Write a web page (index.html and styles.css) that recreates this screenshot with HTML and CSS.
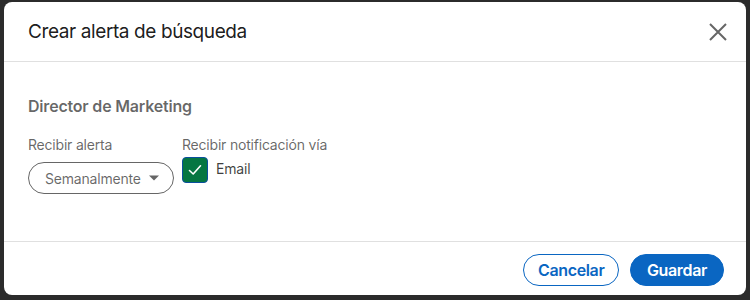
FILE: index.html
```html
<!DOCTYPE html>
<html lang="es">
<head>
<meta charset="utf-8">
<title>Crear alerta de búsqueda</title>
<link rel="stylesheet" href="styles.css">
</head>
<body>
<div class="modal">
  <header class="modal-header">
    <h2 class="modal-title">Crear alerta de búsqueda</h2>
    <button class="close-btn" aria-label="Cerrar">
      <svg width="24" height="24" viewBox="0 0 24 24"><path d="M4 4 L20 20 M20 4 L4 20" stroke="#666" stroke-width="2" fill="none"/></svg>
    </button>
  </header>
  <section class="modal-body">
    <h3 class="search-name">Director de Marketing</h3>
    <div class="fields">
      <div class="field">
        <div class="field-label">Recibir alerta</div>
        <div class="select">
          <span>Semanalmente</span>
          <svg class="caret" width="12" height="8" viewBox="0 0 12 8"><path d="M1 1.5 L11 1.5 L6 6.5 Z" fill="#666"/></svg>
        </div>
      </div>
      <div class="field">
        <div class="field-label">Recibir notificación vía</div>
        <label class="check">
          <span class="box">
            <svg width="16" height="16" viewBox="0 0 16 16"><path d="M2.5 8.5 L6.2 12 L13.5 3.8" stroke="#fff" stroke-width="1.6" fill="none" stroke-linecap="round" stroke-linejoin="round"/></svg>
          </span>
          <span class="check-text">Email</span>
        </label>
      </div>
    </div>
  </section>
  <footer class="modal-footer">
    <button class="btn btn-secondary">Cancelar</button>
    <button class="btn btn-primary">Guardar</button>
  </footer>
</div>
</body>
</html>
```
FILE: styles.css
```css
html, body {
  margin: 0;
  padding: 0;
}
body {
  background: #2b2b2b;
  font-family: Inter, "Noto Sans", "Liberation Sans", sans-serif;
  width: 750px;
  height: 300px;
  overflow: hidden;
}
.modal {
  margin: 2px 4px 0 4px;
  width: 742px;
  height: 293px;
  background: #fff;
  border-radius: 8px;
  display: flex;
  flex-direction: column;
}
.modal-header {
  height: 59px;
  border-bottom: 1px solid #e0e0e0;
  display: flex;
  align-items: center;
  justify-content: space-between;
  padding: 0 16px 0 24px;
}
.modal-title {
  margin: 0;
  font-size: 19px;
  letter-spacing: -0.4px;
  font-weight: 400;
  line-height: 24px;
  color: rgba(0,0,0,0.9);
}
.close-btn {
  background: none;
  border: 0;
  padding: 0;
  width: 24px;
  height: 24px;
  display: flex;
  align-items: center;
  justify-content: center;
}
.modal-body {
  border-bottom: 1px solid #e0e0e0;
  padding: 32px 24px 0 24px;
  box-sizing: border-box;
  height: 180px;
}
.search-name {
  margin: 0 0 17px 0;
  font-size: 16px;
  font-weight: 600;
  letter-spacing: -0.2px;
  line-height: 24px;
  color: rgba(0,0,0,0.6);
}
.fields {
  display: flex;
  gap: 8px;
}
.field-label {
  font-size: 14px;
  line-height: 20px;
  letter-spacing: -0.2px;
  color: rgba(0,0,0,0.6);
}
.select {
  margin-top: 7px;
  height: 32px;
  box-sizing: border-box;
  width: 146px;
  border: 1px solid rgba(0,0,0,0.6);
  border-radius: 16px;
  display: flex;
  align-items: center;
  gap: 7px;
  padding-left: 16px;
  font-size: 14px;
  letter-spacing: -0.2px;
  color: rgba(0,0,0,0.6);
}
.check {
  margin-top: 2px;
  display: flex;
  align-items: center;
  gap: 8px;
}
.box {
  width: 26px;
  height: 26px;
  box-sizing: border-box;
  background: #057642;
  border: 1.5px solid #0a4f9e;
  border-radius: 4px;
  display: flex;
  align-items: center;
  justify-content: center;
}
.check-text {
  font-size: 14px;
  line-height: 20px;
  letter-spacing: -0.2px;
  color: rgba(0,0,0,0.75);
  margin-top: -2px;
}
.modal-footer {
  flex: 1;
  display: flex;
  justify-content: flex-end;
  align-items: flex-start;
  gap: 11px;
  padding: 12px 22px 0 0;
}
.btn {
  height: 32px;
  box-sizing: border-box;
  border-radius: 16px;
  padding: 0 16px;
  font-family: inherit;
  font-size: 16px;
  font-weight: 600;
  letter-spacing: -0.35px;
}
.btn-secondary {
  background: #fff;
  color: #0a66c2;
  border: 1px solid #0a66c2;
  padding: 0 13.5px;
}
.btn-primary {
  background: #0a66c2;
  color: #fff;
  border: 1px solid #0a66c2;
}
```
